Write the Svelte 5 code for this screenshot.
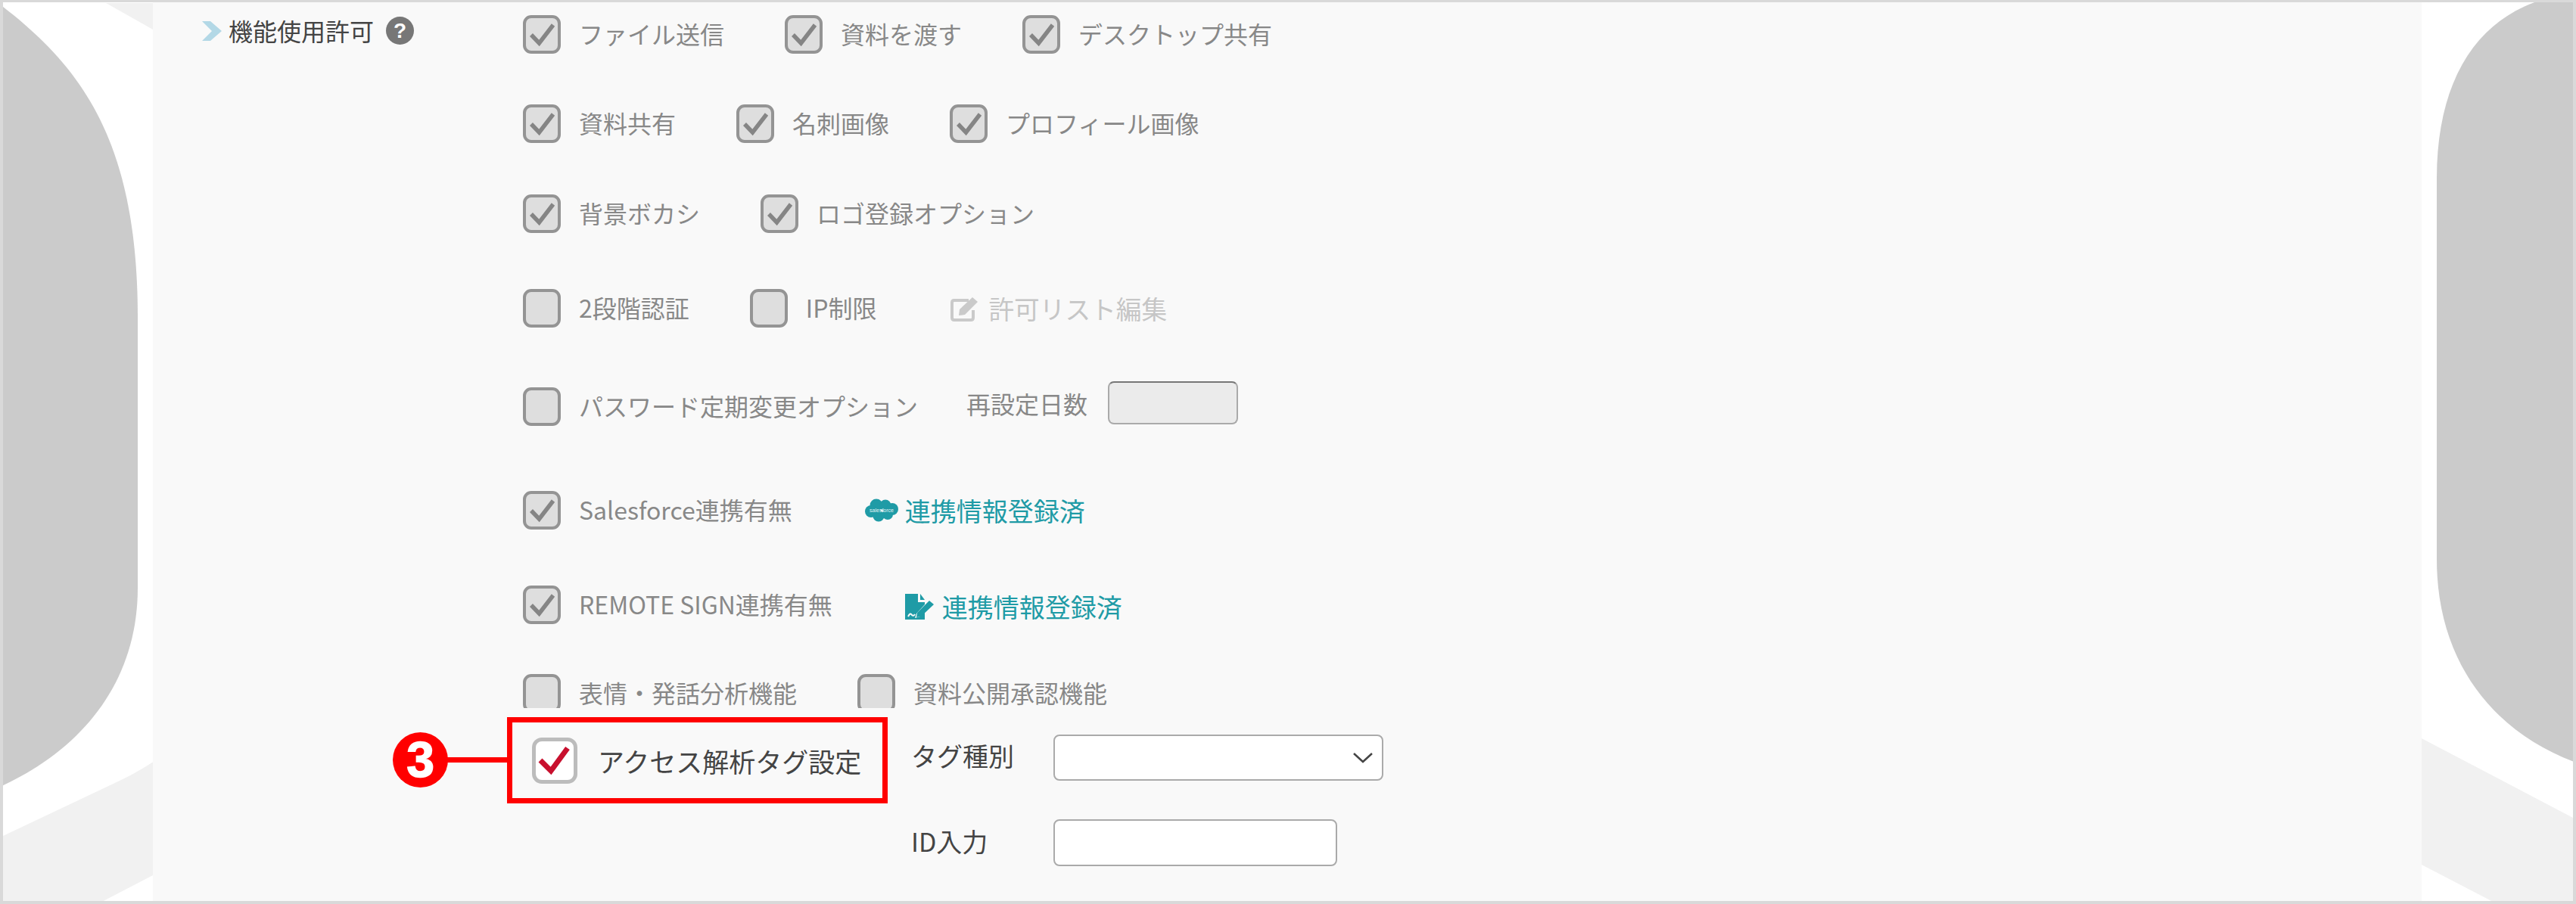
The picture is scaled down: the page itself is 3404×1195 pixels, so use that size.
<script lang="ts">
  interface Opt {
    label: string;
    on: boolean;
  }

  const rowOne: Opt[] = [
    { label: 'ファイル送信', on: true },
    { label: '資料を渡す', on: true },
    { label: 'デスクトップ共有', on: true }
  ];
  const rowTwo: Opt[] = [
    { label: '資料共有', on: true },
    { label: '名刺画像', on: true },
    { label: 'プロフィール画像', on: true }
  ];
  const rowThree: Opt[] = [
    { label: '背景ボカシ', on: true },
    { label: 'ロゴ登録オプション', on: true }
  ];
</script>

{#snippet box(on: boolean)}
  <span class="box">
    {#if on}
      <svg viewBox="0 0 50 50" aria-hidden="true">
        <path class="tick" d="M11 26 L21.500 37 L40 13" />
      </svg>
    {/if}
  </span>
{/snippet}

{#snippet opt(item: Opt)}
  <label class="opt">
    {@render box(item.on)}
    <span class="txt">{item.label}</span>
  </label>
{/snippet}

<div class="frame">
  <!-- decoration behind the panel -->
  <svg class="deco" viewBox="0 0 3404 1195" aria-hidden="true">
    <path class="pale" d="M140 4 L202 39 L202 4 Z" />
    <path class="pale" d="M0 1107 L156 1033 Q180 1022 204 1006 L204 1156 L129 1195 L0 1195 Z" />
    <path class="pale" d="M3198 975 L3404 1083 L3404 1195 L3300 1195 L3198 1142 Z" />
    <path class="grey" d="M0 6 C110 90 182 190 182 420 L182 777 C182 900 110 990 0 1040 Z" />
    <path class="grey" d="M3358 0 C3270 28 3220 110 3220 236 L3220 739 C3220 880 3300 970 3404 1008 L3404 0 Z" />
  </svg>

  <main class="panel">
    <div class="top">
      <div class="head">
        <svg class="arrow" viewBox="0 0 26 26" aria-hidden="true">
          <path d="M0 0 L11 0 L26 13 L11 26 L0 26 L13 13 Z" />
        </svg>
        <span>機能使用許可</span>
        <span class="help">?</span>
      </div>

      <div class="rows">
        <div class="row r1">{#each rowOne as item}{@render opt(item)}{/each}</div>
        <div class="row r2">{#each rowTwo as item}{@render opt(item)}{/each}</div>
        <div class="row r3">{#each rowThree as item}{@render opt(item)}{/each}</div>

        <div class="row r4">
          {@render opt({ label: '2段階認証', on: false })}
          {@render opt({ label: 'IP制限', on: false })}
          <span class="muted">
            <svg viewBox="0 0 38 34" aria-hidden="true">
              <path class="edit-frame" d="M24 6 L5 6 Q2 6 2 9 L2 29 Q2 32 5 32 L27 32 Q30 32 30 29 L30 19" />
              <path class="edit-pen" d="M12 18 L29 2 L36 8 L19 25 L11 26 Z" />
            </svg>
            許可リスト編集
          </span>
        </div>

        <div class="row r5">
          {@render opt({ label: 'パスワード定期変更オプション', on: false })}
          <span class="days">再設定日数</span>
          <input class="days-input" disabled />
        </div>

        <div class="row r6">
          {@render opt({ label: 'Salesforce連携有無', on: true })}
          <span class="linked">
            <svg class="sf" viewBox="0 0 44 31" aria-hidden="true">
              <circle cx="15" cy="9" r="8.500" />
              <circle cx="27" cy="9" r="7.500" />
              <circle cx="36" cy="14" r="8" />
              <circle cx="8" cy="17" r="8" />
              <circle cx="30" cy="21" r="7" />
              <circle cx="18" cy="23" r="7.500" />
              <text x="22" y="17.500" text-anchor="middle">salesforce</text>
            </svg>
            連携情報登録済
          </span>
        </div>

        <div class="row r7">
          {@render opt({ label: 'REMOTE SIGN連携有無', on: true })}
          <span class="linked">
            <svg class="rs" viewBox="0 0 38 34" aria-hidden="true">
              <path class="rs-doc" d="M0 0 L17 0 L17 11 L26 11 L26 14 L15 26 L13 32 L20 30 L26 24 L26 34 L0 34 Z" />
              <path class="rs-doc" d="M20 0 L26 8 L20 8 Z" />
              <path class="rs-doc" d="M16 25 L32 9 L38 14 L21 30 L15 31 Z" />
              <path class="rs-sign" d="M4 30 Q7 24 9 28 Q11 30 13 27" />
            </svg>
            連携情報登録済
          </span>
        </div>

        <div class="row r8">
          {@render opt({ label: '表情・発話分析機能', on: false })}
          {@render opt({ label: '資料公開承認機能', on: false })}
        </div>
      </div>
    </div>

    <div class="access">
      <div class="callout">
        <span class="badge">3</span>
        <span class="wire"></span>
        <label class="access-opt">
          <span class="box-on">
            <svg viewBox="0 0 60 60" aria-hidden="true">
              <path d="M11 30 L25 44 L47 14" />
            </svg>
          </span>
          <span>アクセス解析タグ設定</span>
        </label>
      </div>

      <div class="tag-form">
        <span class="tag-label">タグ種別</span>
        <div class="select-wrap">
          <select class="tag-select" aria-label="タグ種別"></select>
          <svg viewBox="0 0 26 14" aria-hidden="true"><path d="M1 1 L13 12 L25 1" /></svg>
        </div>
        <span class="tag-label">ID入力</span>
        <input class="id-input" aria-label="ID入力" />
      </div>
    </div>
  </main>
</div>

<style>
  :global(body) {
    margin: 0;
    background: #fff;
  }
  .frame {
    position: relative;
    box-sizing: border-box;
    width: 3404px;
    height: 1195px;
    border: 4px solid #d9d9d9;
    border-top-width: 3px;
    overflow: hidden;
    background: #fff;
    font-family: "Noto Sans CJK JP", "Liberation Sans", sans-serif;
    font-size: 32px;
    color: #888;
  }
  .deco {
    position: absolute;
    left: -4px;
    top: -3px;
    width: 3404px;
    height: 1195px;
  }
  .pale {
    fill: #f1f1f1;
  }
  .grey {
    fill: #cbcbcb;
  }
  .panel {
    position: relative;
    box-sizing: border-box;
    width: 2998px;
    height: 100%;
    margin-left: 198px;
    background: #f9f9f9;
  }
  .top {
    display: flex;
    height: 933px;
    overflow: hidden;
    padding-left: 65px;
  }
  .head {
    display: flex;
    align-items: flex-start;
    flex: 0 0 424px;
    padding-top: 19px;
    color: #444;
    line-height: 36px;
  }
  .arrow {
    width: 26px;
    height: 26px;
    margin: 6px 9px 0 0;
    fill: #b3d8e6;
  }
  .help {
    width: 37px;
    height: 37px;
    margin-left: 16px;
    border-radius: 50%;
    background: #777;
    color: #fff;
    font: bold 28px/37px "Liberation Sans", sans-serif;
    text-align: center;
  }
  .rows {
    display: flex;
    flex-direction: column;
  }
  .row {
    display: flex;
    align-items: center;
    gap: 80px;
    height: 51px;
    flex: none;
    white-space: nowrap;
  }
  .r1 {
    margin-top: 17px;
  }
  .r2 {
    margin-top: 67px;
  }
  .r3 {
    margin-top: 68px;
  }
  .r4 {
    margin-top: 74px;
  }
  .r5 {
    margin-top: 79px;
  }
  .r6 {
    margin-top: 86px;
  }
  .r7 {
    margin-top: 74px;
  }
  .r8 {
    margin-top: 66px;
  }
  .opt {
    display: flex;
    align-items: center;
    gap: 24px;
  }
  .txt {
    padding-bottom: 4px;
  }
  .box {
    box-sizing: border-box;
    width: 50px;
    height: 51px;
    border: 4px solid #949494;
    border-radius: 11px;
    background: #dedede;
    flex: none;
  }
  .box svg {
    display: block;
    width: 50px;
    height: 50px;
    margin: -4px;
  }
  .tick {
    fill: none;
    stroke: #858585;
    stroke-width: 5.500;
  }
  .muted {
    display: flex;
    align-items: center;
    gap: 12px;
    margin-left: 18px;
    color: #c6c6c6;
    font-size: 33.700px;
  }
  .muted svg {
    width: 38px;
    height: 34px;
  }
  .edit-frame {
    fill: none;
    stroke: #cacaca;
    stroke-width: 4;
  }
  .edit-pen {
    fill: #cacaca;
  }
  .days {
    margin-left: -16px;
    padding-bottom: 10px;
  }
  .days-input {
    box-sizing: border-box;
    width: 172px;
    height: 57px;
    margin: -10px 0 0 -53px;
    border: 2px solid #aaa;
    border-top-color: #777;
    border-radius: 8px;
    background: #ebebeb;
  }
  .linked {
    display: flex;
    align-items: center;
    gap: 9px;
    margin-left: 16px;
    color: #1f9ba6;
    font-size: 34px;
  }
  .r7 .linked {
    gap: 11px;
    padding-top: 4px;
  }
  .sf {
    width: 44px;
    height: 31px;
    fill: #1f9ba6;
  }
  .sf text {
    fill: #e4f3f5;
    font-size: 7px;
    font-family: "Liberation Sans", sans-serif;
  }
  .rs {
    width: 38px;
    height: 34px;
  }
  .rs-doc {
    fill: #1f9ba6;
  }
  .rs-sign {
    fill: none;
    stroke: #f9f9f9;
    stroke-width: 2;
  }
  .access {
    display: flex;
    gap: 31px;
    margin: 12px 0 0 468px;
  }
  .callout {
    position: relative;
  }
  .access-opt {
    box-sizing: border-box;
    display: flex;
    align-items: center;
    gap: 27px;
    width: 503px;
    height: 114px;
    padding: 0 0 0 26px;
    border: 7px solid #f00;
    color: #444;
    font-size: 35px;
    white-space: nowrap;
  }
  .box-on {
    box-sizing: border-box;
    display: block;
    width: 60px;
    height: 61px;
    border: 5px solid #bcbcbc;
    border-radius: 13px;
    background: #fff;
    flex: none;
  }
  .box-on svg {
    display: block;
    width: 60px;
    height: 60px;
    margin: -5px;
    fill: none;
    stroke: #c8102e;
    stroke-width: 7;
  }
  .badge {
    position: absolute;
    left: -151px;
    top: 20px;
    width: 73px;
    height: 73px;
    border-radius: 50%;
    background: #f00;
    color: #fff;
    font: bold 66px/73px "Liberation Sans", sans-serif;
    text-align: center;
    -webkit-text-stroke: 1.500px #fff;
  }
  .wire {
    position: absolute;
    left: -80px;
    top: 53px;
    width: 80px;
    height: 7px;
    background: #f00;
  }
  .tag-form {
    display: grid;
    grid-template-columns: 188px auto;
    grid-template-rows: 61px 62px;
    row-gap: 51px;
    align-items: center;
    justify-items: start;
    margin-top: 23px;
    color: #444;
    font-size: 34px;
  }
  .tag-label {
    padding-bottom: 6px;
  }
  .select-wrap {
    position: relative;
    width: 436px;
    height: 61px;
  }
  .select-wrap svg {
    position: absolute;
    right: 14px;
    top: 24px;
    width: 26px;
    height: 14px;
    fill: none;
    stroke: #444;
    stroke-width: 2.500;
  }
  .tag-select {
    appearance: none;
    box-sizing: border-box;
    display: block;
    width: 100%;
    height: 100%;
    border: 2px solid #aaa;
    border-radius: 8px;
    background: #fff;
  }
  .id-input {
    box-sizing: border-box;
    width: 375px;
    height: 62px;
    border: 2px solid #aaa;
    border-radius: 8px;
    background: #fff;
  }
</style>
